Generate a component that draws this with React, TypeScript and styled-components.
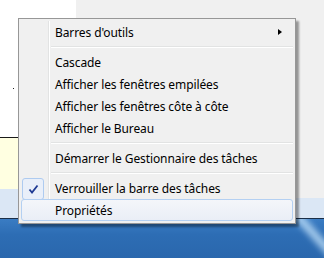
import * as React from 'react'
import styled, { createGlobalStyle } from 'styled-components'

const Global = createGlobalStyle`
  html, body { margin: 0; padding: 0; }
  body {
    width: 324px;
    height: 258px;
    overflow: hidden;
    font-family: "Noto Sans", "Open Sans", sans-serif;
  }
`

const Screen = styled.div`
  position: relative;
  width: 324px;
  height: 258px;
  display: flex;
  flex-direction: column;
`

const Desktop = styled.div`
  display: flex;
  height: 218px;
`

const LeftPane = styled.div`
  width: 76px;
  display: flex;
  flex-direction: column;
`

const Blank = styled.div`
  height: 137px;
  background: #ffffff;
  border-bottom: 1px solid #1a1a1a;
  position: relative;
`

const Dot = styled.span`
  position: absolute;
  left: 13px;
  top: 88px;
  width: 1px;
  height: 1px;
  background: #222;
`

const Tip = styled.div`
  height: 51px;
  background: #ffffe1;
`

const Strip = styled.div<{ $h: number }>`
  height: ${p => p.$h}px;
  background: #dbe7f5;
`

const RightPane = styled.div`
  flex: 1;
  display: flex;
  flex-direction: column;
`

const Grey = styled.div`
  height: 198px;
  background: #f0f0f0;
`

const Taskbar = styled.div`
  flex: 1;
  border-top: 1px solid #1b2f48;
  background: linear-gradient(180deg, #3a7cc3 0%, #2d6db4 40%, #2a67ad 100%);
  position: relative;
  overflow: hidden;
`

const Streak = styled.div`
  position: absolute;
  right: -4px;
  top: -28px;
  width: 16px;
  height: 100px;
  transform: rotate(-42deg);
  filter: blur(2px);
  background: linear-gradient(90deg, rgba(170,210,245,0) 0%, rgba(200,230,252,0.8) 50%, rgba(170,210,245,0) 100%);
`

const Menu = styled.div`
  position: absolute;
  left: 18px;
  top: 18px;
  width: 272px;
  padding: 2px;
  background: #f0f0f0;
  border: 1px solid #979797;
  box-shadow: 3px 3px 2px rgba(0, 0, 0, 0.38);
  display: flex;
  flex-direction: column;
  font-size: 12px;
  color: #000;
`

const GutterLine = styled.div`
  position: absolute;
  left: 29px;
  top: 2px;
  bottom: 2px;
  width: 1px;
  background: #e2e3e3;
  border-right: 1px solid #ffffff;
`

const Item = styled.div<{ $hot?: boolean }>`
  position: relative;
  height: 22px;
  display: flex;
  align-items: center;
  padding-left: 33px;
  box-sizing: border-box;
  border-radius: 3px;
  border: 1px solid ${p => (p.$hot ? '#b4d0f2' : 'transparent')};
  background: ${p => (p.$hot ? 'linear-gradient(180deg, #f4f6fa 0%, #eaeef6 100%)' : 'transparent')};
  white-space: nowrap;
  letter-spacing: -0.1px;
`

const CheckBox = styled.div`
  position: absolute;
  left: 0;
  top: 0;
  width: 22px;
  height: 22px;
  box-sizing: border-box;
  border: 1px solid #aecbf0;
  border-radius: 3px;
  background: #e9eff9;
  display: flex;
  align-items: center;
  justify-content: center;
`

const Arrow = styled.span`
  position: absolute;
  right: 10px;
  top: 7px;
  width: 0;
  height: 0;
  border-top: 3.5px solid transparent;
  border-bottom: 3.5px solid transparent;
  border-left: 4px solid #000;
`

const Separator = styled.div`
  height: 8px;
  display: flex;
  align-items: center;
  padding-left: 30px;
  &::after {
    content: '';
    flex: 1;
    height: 1px;
    background: #e2e3e3;
    border-bottom: 1px solid #ffffff;
  }
`

const Check = () => (
  <svg width="11" height="11" viewBox="0 0 11 11">
    <path d="M1.5 5.5 L4 8.5 L9.5 1.5" fill="none" stroke="#1f3a93" strokeWidth="1.8" />
  </svg>
)

export default function App() {
  return (
    <Screen>
      <Global />
      <Desktop>
        <LeftPane>
          <Blank><Dot /></Blank>
          <Tip />
          <Strip $h={29} />
        </LeftPane>
        <RightPane>
          <Grey />
          <Strip $h={20} />
        </RightPane>
      </Desktop>
      <Taskbar><Streak /></Taskbar>
      <Menu>
        <GutterLine />
        <Item>Barres d'outils<Arrow /></Item>
        <Separator />
        <Item>Cascade</Item>
        <Item>Afficher les fenêtres empilées</Item>
        <Item>Afficher les fenêtres côte à côte</Item>
        <Item>Afficher le Bureau</Item>
        <Separator />
        <Item>Démarrer le Gestionnaire des tâches</Item>
        <Separator />
        <Item><CheckBox><Check /></CheckBox>Verrouiller la barre des tâches</Item>
        <Item $hot>Propriétés</Item>
      </Menu>
    </Screen>
  )
}
